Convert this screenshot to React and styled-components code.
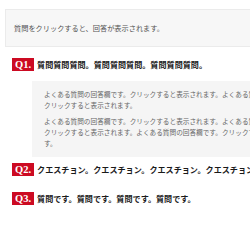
import React from 'react';
import styled, { createGlobalStyle } from 'styled-components';

const GlobalStyle = createGlobalStyle`
	html, body {
		margin: 0;
		background: #fff;
		overflow: hidden;
	}
`

const Page = styled.div`
	width: 330px;
	padding: 9px 0 0 5px;
	font-family: "Noto Sans CJK JP", "Noto Sans", sans-serif;
`

const Intro = styled.div`
	display: flex;
	align-items: center;
	height: 36px;
	padding: 0 8px;
	background: #f7f7f7;
	border: 1px solid #ebebeb;
	font-size: 7.2px;
	color: #555;
`

const FaqList = styled.dl`
	display: flex;
	flex-direction: column;
	gap: 6px;
	margin: 11px 0 0 0;
`

const Question = styled.dt`
	display: flex;
	align-items: center;
	gap: 3px;
	height: 13px;
	margin: 0 0 10px 0;
	padding-left: 7px;
	font-size: 8.1px;
	font-weight: 700;
	color: #1a1a1a;
	white-space: nowrap;
`

const Badge = styled.span`
	display: inline-block;
	height: 13px;
	line-height: 13px;
	padding: 0 3px;
	background: #cc0a22;
	color: #fff;
	font-family: "Liberation Serif", serif;
	font-size: 10.5px;
	font-weight: 700;
`

const Answer = styled.dd`
	display: flex;
	flex-direction: column;
	gap: 5px;
	width: 269px;
	margin: 0 0 0 27px;
	padding: 8px 12px;
	background: #f5f5f5;
	font-size: 6.65px;
	line-height: 11px;
	color: #666;
`

const Para = styled.p`
	margin: 0;
`

const faqs = [
	{
		q: '質問質問質問。質問質問質問。質問質問質問。',
		a: [
			'よくある質問の回答欄です。クリックすると表示されます。よくある質問の回答欄です。クリックすると表示されます。',
			'よくある質問の回答欄です。クリックすると表示されます。よくある質問の回答欄です。クリックすると表示されます。よくある質問の回答欄です。クリックすると表示されます。',
		],
	},
	{ q: 'クエスチョン。クエスチョン。クエスチョン。クエスチョン。' },
	{ q: '質問です。質問です。質問です。質問です。' },
];

const App = () => {
	return (
		<Page>
			<GlobalStyle />
			<Intro>質問をクリックすると、回答が表示されます。</Intro>
			<FaqList>
				{faqs.map((item, i) => (
					<div key={i}>
						<Question>
							<Badge>Q{i + 1}.</Badge>
							{item.q}
						</Question>
						{item.a && (
							<Answer>
								{item.a.map((text, j) => <Para key={j}>{text}</Para>)}
							</Answer>
						)}
					</div>
				))}
			</FaqList>
		</Page>
	);
}

export default App;
